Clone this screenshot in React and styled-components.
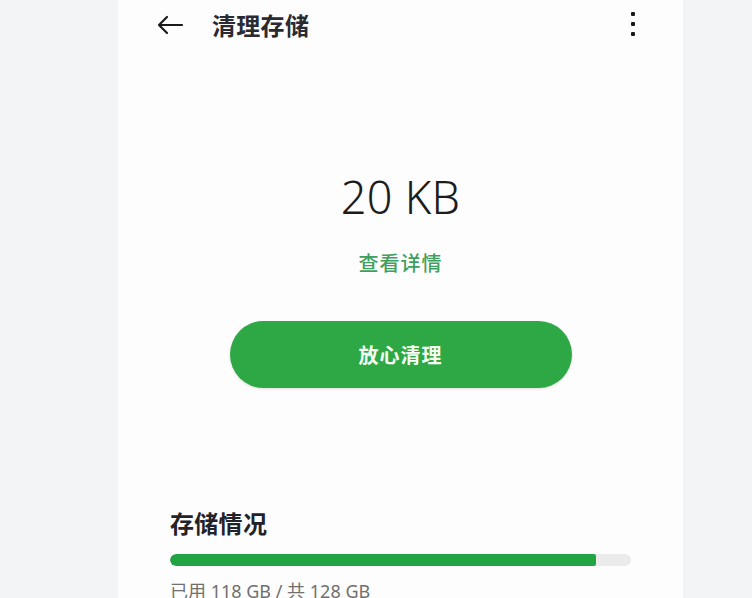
import React from "react";
import styled, { createGlobalStyle } from "styled-components";

const Global = createGlobalStyle`
  html, body { margin: 0; padding: 0; background: #f3f4f6; }
  body { font-family: "Noto Sans", "Noto Sans CJK SC", sans-serif; }
`;

const Page = styled.div`
  width: 752px;
  height: 598px;
  overflow: hidden;
  background: #f3f4f6;
  display: flex;
  padding-left: 118px;
  box-sizing: border-box;
`;

const Panel = styled.div`
  width: 565px;
  height: 100%;
  background: #fdfdfd;
  display: flex;
  flex-direction: column;
`;

const TopBar = styled.div`
  height: 48px;
  flex-shrink: 0;
  display: flex;
  align-items: center;
  padding: 0 48px 0 38px;
`;

const BackBtn = styled.div`
  width: 28px;
  height: 28px;
  display: flex;
  align-items: center;
  justify-content: center;
  margin-right: 28px;
  margin-top: 1px;
`;

const Title = styled.div`
  flex: 1;
  font-family: "Noto Sans CJK SC", sans-serif;
  font-size: 24px;
  font-weight: 700;
  color: #2a2a33;
  letter-spacing: 0.3px;
`;

const MoreBtn = styled.div`
  display: flex;
  flex-direction: column;
  gap: 6px;
  align-items: center;
  margin-top: 0;
`;

const Dot = styled.span`
  width: 4px;
  height: 4px;
  border-radius: 1px;
  background: #1a1a1a;
`;

const Hero = styled.div`
  display: flex;
  flex-direction: column;
  align-items: center;
  padding-top: 123px;
`;

const Size = styled.div`
  font-family: "Noto Sans", sans-serif;
  font-size: 45px;
  font-weight: 300;
  color: #1c1c1c;
  line-height: 52px;
  letter-spacing: 0.3px;
`;

const DetailLink = styled.div`
  margin-top: 26px;
  font-family: "Noto Sans CJK SC", sans-serif;
  font-size: 20px;
  font-weight: 500;
  color: #3f9f5e;
  line-height: 28px;
  letter-spacing: 1px;
`;

const CleanButton = styled.button`
  margin-top: 44px;
  width: 342px;
  height: 67px;
  flex-shrink: 0;
  border: none;
  border-radius: 34px;
  background: #2ea745;
  color: #f4fff4;
  font-family: "Noto Sans CJK SC", sans-serif;
  font-size: 20px;
  font-weight: 700;
  letter-spacing: 1px;
  box-shadow: 0 1px 3px rgba(0, 0, 0, 0.12);
`;

const Section = styled.div`
  padding: 120px 52px 0 52px;
  display: flex;
  flex-direction: column;
`;

const SectionTitle = styled.div`
  font-family: "Noto Sans CJK SC", sans-serif;
  font-size: 24px;
  font-weight: 700;
  color: #22222a;
  line-height: 30px;
  letter-spacing: 0.3px;
`;

const Track = styled.div`
  margin-top: 16px;
  height: 12px;
  flex-shrink: 0;
  border-radius: 6px;
  background: #ebebeb;
  overflow: hidden;
`;

const Fill = styled.div`
  height: 100%;
  background: #22a344;
  border-radius: 6px 2px 2px 6px;
`;

const Usage = styled.div`
  margin-top: 13px;
  font-family: "Noto Sans", "Noto Sans CJK SC", sans-serif;
  font-size: 18px;
  color: #707070;
  line-height: 24px;
`;

export default function App() {
  const used = 118;
  const total = 128;
  return (
    <>
      <Global />
      <Page>
        <Panel>
          <TopBar>
            <BackBtn>
              <svg width="28" height="20" viewBox="0 0 28 20" fill="none">
                <path d="M26 10H3M11 2L3 10L11 18" stroke="#1a1a1a" strokeWidth="2.2" strokeLinecap="round" strokeLinejoin="round" />
              </svg>
            </BackBtn>
            <Title>清理存储</Title>
            <MoreBtn>
              <Dot />
              <Dot />
              <Dot />
            </MoreBtn>
          </TopBar>
          <Hero>
            <Size>20 KB</Size>
            <DetailLink>查看详情</DetailLink>
            <CleanButton>放心清理</CleanButton>
          </Hero>
          <Section>
            <SectionTitle>存储情况</SectionTitle>
            <Track>
              <Fill style={{ width: `${(425 / 460) * 100}%` }} />
            </Track>
            <Usage>已用 {used} GB / 共 {total} GB</Usage>
          </Section>
        </Panel>
      </Page>
    </>
  );
}
